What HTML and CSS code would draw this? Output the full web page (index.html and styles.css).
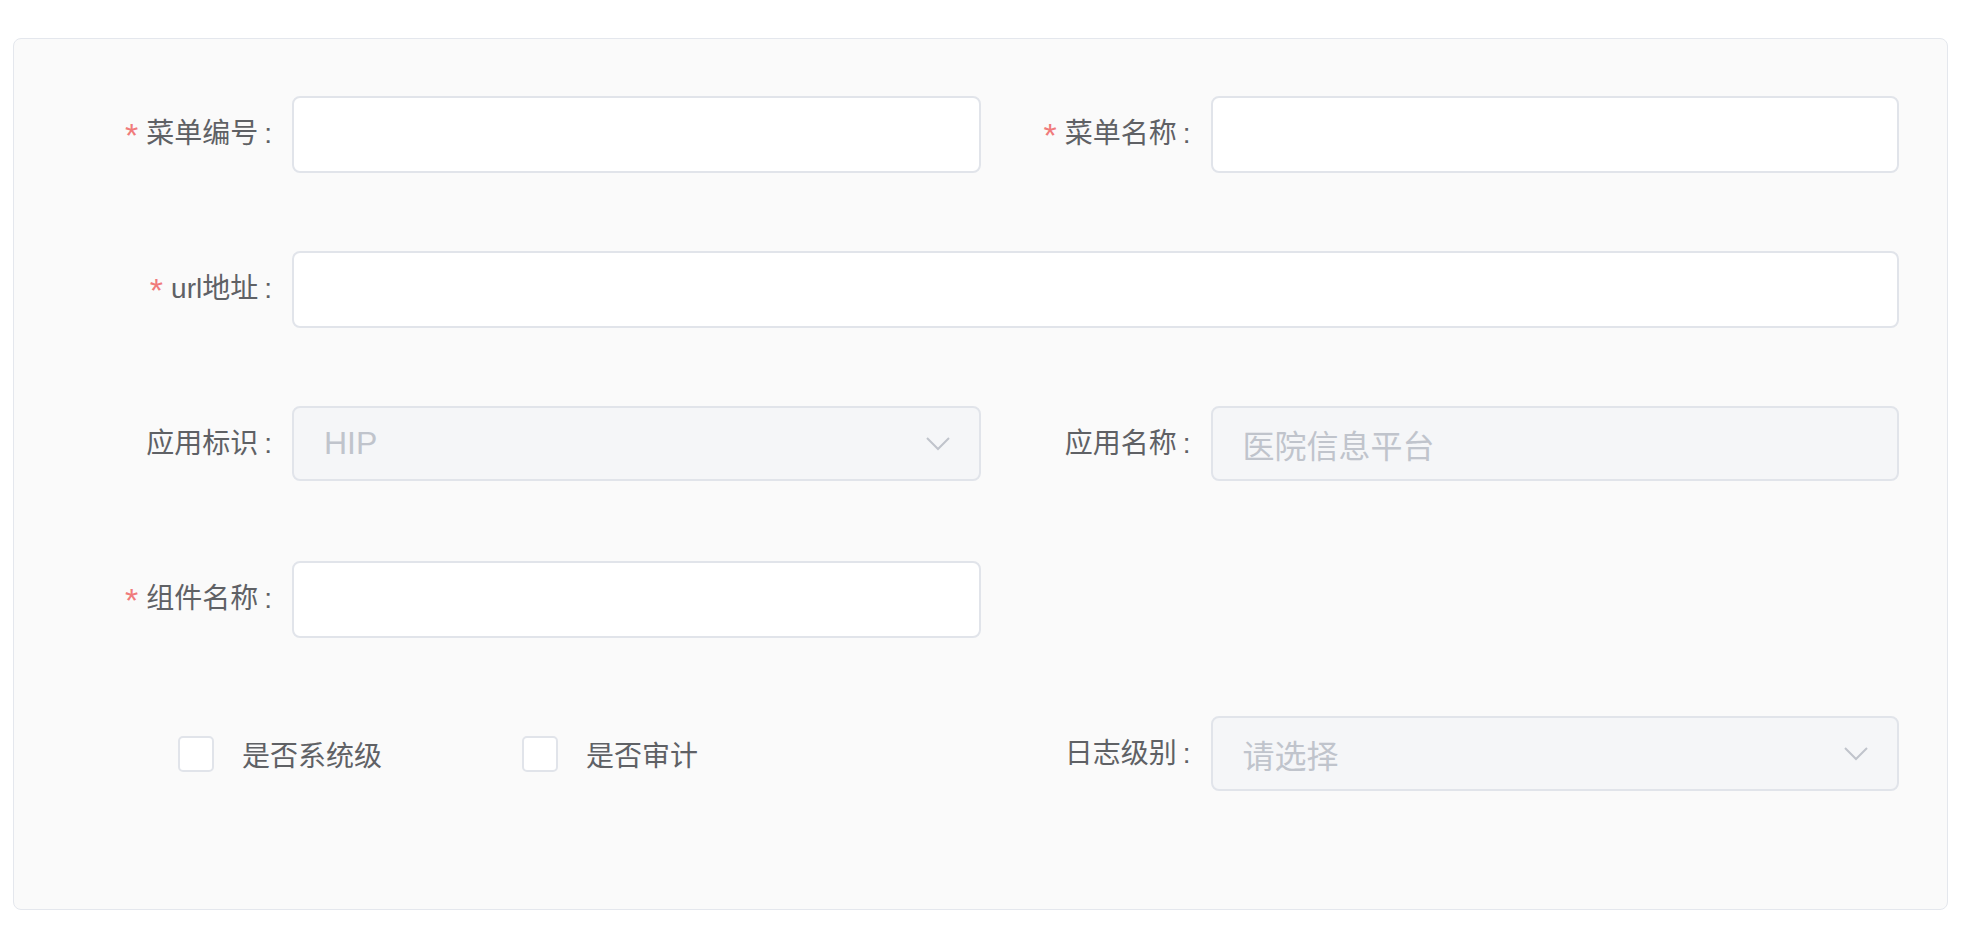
FILE: index.html
```html
<!DOCTYPE html>
<html lang="zh">
<head>
<meta charset="utf-8">
<title>菜单表单</title>
<link rel="stylesheet" href="styles.css">
</head>
<body>
<div class="panel">
  <form class="form">
    <div class="row">
      <div class="item">
        <label class="label"><span class="req">*</span>菜单编号<span class="colon">:</span></label>
        <div class="control"><div class="input"></div></div>
      </div>
      <div class="item">
        <label class="label"><span class="req">*</span>菜单名称<span class="colon">:</span></label>
        <div class="control"><div class="input"></div></div>
      </div>
    </div>
    <div class="row">
      <div class="item item-full">
        <label class="label"><span class="req">*</span>url地址<span class="colon">:</span></label>
        <div class="control"><div class="input"></div></div>
      </div>
    </div>
    <div class="row">
      <div class="item">
        <label class="label">应用标识<span class="colon">:</span></label>
        <div class="control">
          <div class="input disabled select">
            <span class="value">HIP</span>
            <svg class="chev" width="24" height="15" viewBox="0 0 24 15"><path d="M1 2 L12 13 L23 2" fill="none" stroke="#c0c4cc" stroke-width="2"/></svg>
          </div>
        </div>
      </div>
      <div class="item">
        <label class="label">应用名称<span class="colon">:</span></label>
        <div class="control"><div class="input disabled"><span class="value">医院信息平台</span></div></div>
      </div>
    </div>
    <div class="row">
      <div class="item">
        <label class="label"><span class="req">*</span>组件名称<span class="colon">:</span></label>
        <div class="control"><div class="input"></div></div>
      </div>
      <div class="item"></div>
    </div>
    <div class="row">
      <div class="item checks">
        <div class="check check-first"><span class="box"></span><span class="check-text">是否系统级</span></div>
        <div class="check"><span class="box"></span><span class="check-text">是否审计</span></div>
      </div>
      <div class="item">
        <label class="label">日志级别<span class="colon">:</span></label>
        <div class="control">
          <div class="input disabled select">
            <span class="value">请选择</span>
            <svg class="chev" width="24" height="15" viewBox="0 0 24 15"><path d="M1 2 L12 13 L23 2" fill="none" stroke="#c0c4cc" stroke-width="2"/></svg>
          </div>
        </div>
      </div>
    </div>
  </form>
</div>
</body>
</html>
```
FILE: styles.css
```css
html, body {
  margin: 0;
  padding: 0;
  background: #ffffff;
}
body {
  font-family: "Liberation Sans", "Noto Sans CJK SC", sans-serif;
  color: #606266;
  padding: 38px 18px 0 13px;
}
.panel {
  background: #fafafa;
  border: 1px solid #e4e7ed;
  border-radius: 8px;
  padding: 57px 48px 40px 48px;
  height: 773px;
}
.form {
  display: flex;
  flex-direction: column;
  gap: 80px;
}
.row {
  display: grid;
  grid-template-columns: 1fr 1fr;
  height: 75px;
}
.item {
  display: flex;
  align-items: center;
}
.item-full {
  grid-column: 1 / 3;
}
.label {
  width: 230px;
  box-sizing: border-box;
  padding-right: 20px;
  text-align: right;
  font-size: 28px;
  line-height: 75px;
  color: #5f6165;
  flex: none;
  white-space: nowrap;
}
.req {
  color: #f07b7b;
  font-size: 34px;
  vertical-align: -4px;
  margin-right: 8px;
}
.colon {
  margin-left: 6px;
}
.control {
  flex: 1;
  height: 100%;
}
.input {
  box-sizing: border-box;
  height: 100%;
  background: #ffffff;
  border: 2px solid #e1e4ea;
  border-radius: 8px;
  padding: 0 30px;
  display: flex;
  align-items: center;
  font-size: 32px;
  color: #c0c4cc;
}
.input.disabled {
  background: #f5f6f8;
  border-color: #e1e4ea;
}
.select {
  justify-content: space-between;
  padding-right: 29px;
}
.chev {
  display: block;
}
.checks {
  padding-left: 116px;
}
.check {
  display: flex;
  align-items: center;
}
.check-first {
  width: 344px;
}
.box {
  width: 36px;
  height: 36px;
  box-sizing: border-box;
  border: 2px solid #e1e4ea;
  border-radius: 5px;
  background: #ffffff;
  flex: none;
}
.check-text {
  margin-left: 28px;
  font-size: 28px;
  color: #5f6165;
}
```
